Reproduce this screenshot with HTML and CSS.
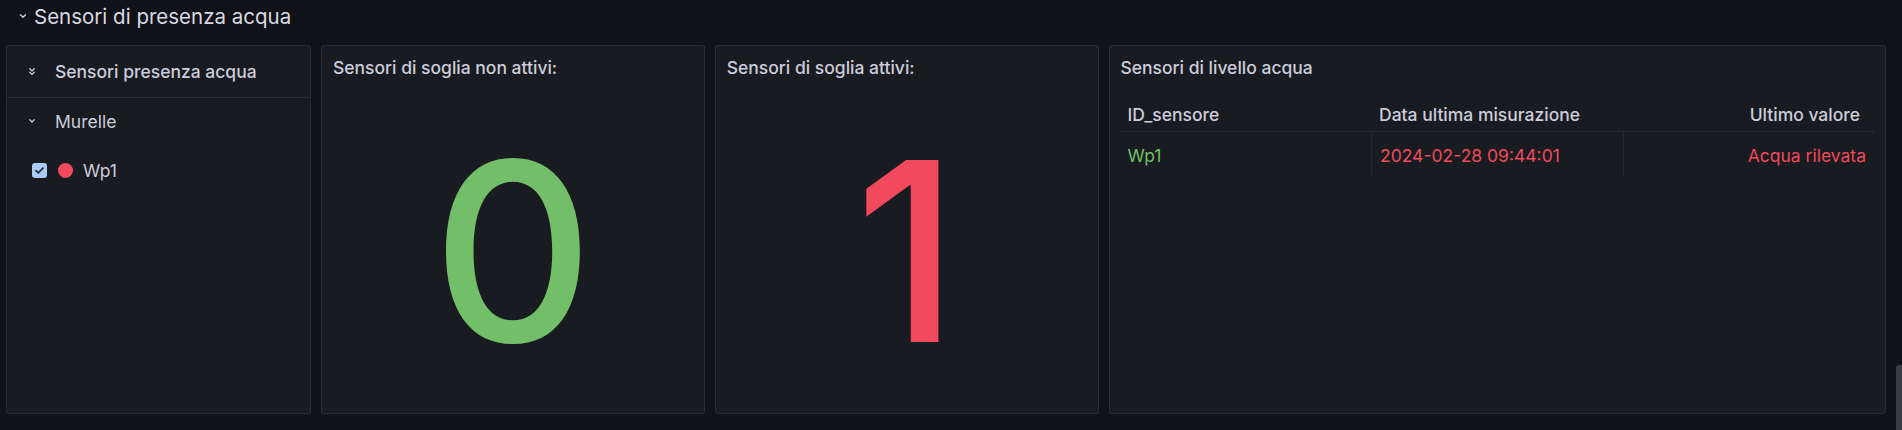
FILE: index.html
```html
<!DOCTYPE html>
<html lang="it">
<head>
<meta charset="utf-8">
<title>Sensori di presenza acqua</title>
<link rel="stylesheet" href="styles.css">
</head>
<body>
<div class="row-header">
  <svg class="row-chevron" width="10" height="10" viewBox="0 0 10 10"><path d="M2.5 3.8 L5 6.3 L7.5 3.8" fill="none" stroke="#ccccdc" stroke-width="1.4" stroke-linecap="round" stroke-linejoin="round"/></svg>
  <span class="row-title">Sensori di presenza acqua</span>
</div>
<div class="grid">
  <section class="panel p-tree">
    <div class="tree-head">
      <svg class="tree-chev" width="10" height="10" viewBox="0 0 10 10"><path d="M2.8 1.8 L5 4 L7.2 1.8 M2.8 5.2 L5 7.4 L7.2 5.2" fill="none" stroke="#ccccdc" stroke-width="1.3" stroke-linecap="round" stroke-linejoin="round"/></svg>
      <span>Sensori presenza acqua</span>
    </div>
    <div class="tree-group">
      <svg class="tree-chev" width="10" height="10" viewBox="0 0 10 10"><path d="M2.8 3.8 L5 6 L7.2 3.8" fill="none" stroke="#ccccdc" stroke-width="1.3" stroke-linecap="round" stroke-linejoin="round"/></svg>
      <span>Murelle</span>
    </div>
    <div class="tree-item">
      <span class="check"><svg width="15" height="15" viewBox="0 0 15 15"><path d="M4 7.6 L6.3 9.9 L11 5.2" fill="none" stroke="#1f2a38" stroke-width="1.7" stroke-linecap="round" stroke-linejoin="round"/></svg></span>
      <span class="dot"></span>
      <span>Wp1</span>
    </div>
  </section>
  <section class="panel p-stat">
    <div class="panel-title">Sensori di soglia non attivi:</div>
    <div class="stat-body"><span class="stat-value green">0</span></div>
  </section>
  <section class="panel p-stat">
    <div class="panel-title">Sensori di soglia attivi:</div>
    <div class="stat-body"><span class="stat-value red">1</span></div>
  </section>
  <section class="panel p-table">
    <div class="panel-title">Sensori di livello acqua</div>
    <div class="table">
      <div class="tr th">
        <div class="cell">ID_sensore</div>
        <div class="cell">Data ultima misurazione</div>
        <div class="cell right head-right">Ultimo valore</div>
      </div>
      <div class="tr td">
        <div class="cell green">Wp1</div>
        <div class="cell red">2024-02-28 09:44:01</div>
        <div class="cell right red">Acqua rilevata</div>
      </div>
    </div>
  </section>
</div>
<div class="scroll-thumb"></div>
</body>
</html>
```

FILE: styles.css
```css
html, body {
  margin: 0;
  padding: 0;
}
body {
  background: #111217;
  color: #ccccdc;
  font-family: Inter, "Noto Sans", sans-serif;
  width: 1902px;
  height: 430px;
  overflow: hidden;
  position: relative;
}
.row-header {
  height: 32px;
  padding: 0 0 0 18px;
  display: flex;
  align-items: center;
  gap: 6px;
}
.row-title {
  font-size: 20.5px;
  font-weight: 400;
  color: #d8d9e3;
}
.grid {
  margin-top: 13px;
  display: grid;
  grid-template-columns: repeat(24, 1fr);
  gap: 10px;
  padding: 0 16px 0 6px;
  height: 369px;
}
.panel {
  background: #181b1f;
  border: 1px solid #2a2c32;
  border-radius: 2px;
  display: flex;
  flex-direction: column;
  min-width: 0;
}
.p-tree { grid-column: span 4; }
.p-stat { grid-column: span 5; }
.p-table { grid-column: span 10; }

.tree-head, .tree-group, .tree-item {
  display: flex;
  align-items: center;
  font-size: 17.5px;
  font-weight: 400;
}
.tree-head {
  height: 51px;
  border-bottom: 1px solid #2a2c32;
  padding-left: 20px;
  font-weight: 500;
}
.tree-group {
  height: 46px;
  padding-left: 20px;
}
.tree-item {
  height: 52px;
  padding-left: 25px;
}
.tree-chev { margin-right: 18px; }
.check {
  width: 15px;
  height: 15px;
  border-radius: 3px;
  background: #a9ccf7;
  display: inline-flex;
  margin-right: 11px;
}
.dot {
  width: 15px;
  height: 15px;
  border-radius: 50%;
  background: #f2495c;
  margin-right: 10px;
}

.panel-title {
  height: 42px;
  padding: 0 11px;
  display: flex;
  align-items: center;
  font-size: 17.5px;
  font-weight: 500;
  white-space: nowrap;
}
.stat-body {
  flex: 1;
  display: flex;
  align-items: center;
  justify-content: center;
}
.stat-value {
  font-size: 250px;
  line-height: 1;
  font-weight: 500;
}
.green { color: #73bf69; }
.red { color: #f2495c; }

.table {
  margin: 10px 11px 0 10px;
}
.tr {
  display: grid;
  grid-template-columns: 1fr 1fr 1fr;
}
.th {
  height: 33px;
  border-bottom: 1px solid #2a2c32;
  font-weight: 500;
}
.td {
  height: 46px;
}
.cell {
  display: flex;
  align-items: center;
  padding: 0 8px;
  font-size: 17.5px;
  white-space: nowrap;
}
.td .cell + .cell { border-left: 1px solid #24262c; }
.right { justify-content: flex-end; }
.head-right { padding-right: 14px; }

.scroll-thumb {
  position: absolute;
  right: 0;
  top: 365px;
  width: 6px;
  height: 65px;
  background: #3b3c42;
  border-radius: 3px 0 0 0;
}
```
